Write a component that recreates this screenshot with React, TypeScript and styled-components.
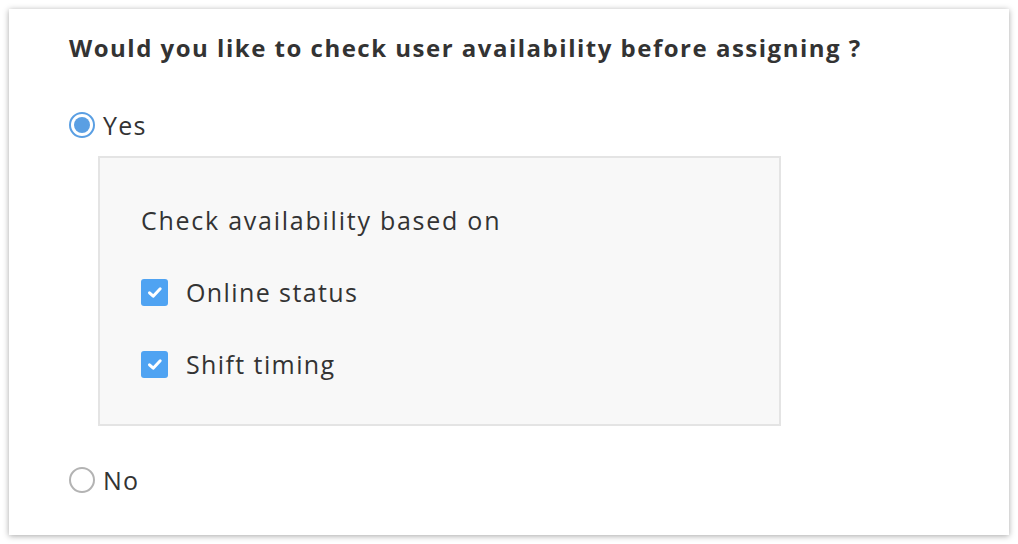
import React, { useState } from "react";
import styled, { createGlobalStyle } from "styled-components";

const GlobalStyle = createGlobalStyle`
  html, body {
    margin: 0;
    padding: 0;
    background: #ffffff;
  }
  body {
    font-family: "Open Sans", "Liberation Sans", sans-serif;
    color: #333333;
  }
`;

const Page = styled.div`
  padding: 9px;
`;

const Card = styled.section`
  width: 1000px;
  height: 526px;
  box-sizing: border-box;
  background: #ffffff;
  box-shadow: 0 1px 6px rgba(0, 0, 0, 0.35);
  padding: 24px 0 0 60px;
`;

const Title = styled.h2`
  margin: 0;
  font-size: 24px;
  font-weight: 700;
  line-height: 30px;
  color: #333333;
  letter-spacing: 1.5px;
`;

const Option = styled.label<{ $top: number }>`
  display: flex;
  align-items: center;
  gap: 8px;
  height: 30px;
  font-size: 25px;
  letter-spacing: 1.2px;
  color: #333333;
  cursor: pointer;
  margin-top: ${(p) => p.$top}px;
`;

const Radio = styled.span<{ $on: boolean }>`
  width: 26px;
  height: 26px;
  box-sizing: border-box;
  border-radius: 50%;
  border: 2px solid ${(p) => (p.$on ? "#5a9fe3" : "#b3b3b3")};
  display: flex;
  align-items: center;
  justify-content: center;
  background: #fff;

  &::after {
    content: "";
    width: 16px;
    height: 16px;
    border-radius: 50%;
    background: #5a9fe3;
    display: ${(p) => (p.$on ? "block" : "none")};
  }
`;

const Panel = styled.div`
  margin: 16px 0 0 29px;
  width: 683px;
  height: 270px;
  box-sizing: border-box;
  background: #f8f8f8;
  border: 2px solid #e4e4e4;
  padding: 47px 0 0 41px;
`;

const PanelTitle = styled.div`
  font-size: 25px;
  line-height: 30px;
  letter-spacing: 1.75px;
  color: #333333;
`;

const CheckRow = styled.label<{ $top: number }>`
  display: flex;
  align-items: center;
  gap: 18px;
  height: 30px;
  font-size: 25px;
  letter-spacing: 1.4px;
  color: #333333;
  margin-top: ${(p) => p.$top}px;
  cursor: pointer;
`;

const Box = styled.span`
  width: 27px;
  height: 27px;
  border-radius: 3px;
  background: #4fa3f2;
  display: flex;
  align-items: center;
  justify-content: center;
`;

function Tick() {
  return (
    <svg width="16" height="13" viewBox="0 0 16 13">
      <path d="M2.5 6.8 L6.2 10.2 L13.2 2.8" fill="none" stroke="#ffffff" strokeWidth="3" strokeLinecap="round" strokeLinejoin="round" />
    </svg>
  );
}

export default function App() {
  const [yes, setYes] = useState(true);
  const [online, setOnline] = useState(true);
  const [shift, setShift] = useState(true);

  return (
    <Page>
      <GlobalStyle />
      <Card>
        <Title>Would you like to check user availability before assigning ?</Title>

        <Option $top={47} onClick={() => setYes(true)}>
          <Radio $on={yes} />
          Yes
        </Option>

        <Panel>
          <PanelTitle>Check availability based on</PanelTitle>
          <CheckRow $top={42} onClick={() => setOnline(!online)}>
            <Box>{online && <Tick />}</Box>
            Online status
          </CheckRow>
          <CheckRow $top={42} onClick={() => setShift(!shift)}>
            <Box>{shift && <Tick />}</Box>
            Shift timing
          </CheckRow>
        </Panel>

        <Option $top={39} onClick={() => setYes(false)}>
          <Radio $on={!yes} />
          No
        </Option>
      </Card>
    </Page>
  );
}
